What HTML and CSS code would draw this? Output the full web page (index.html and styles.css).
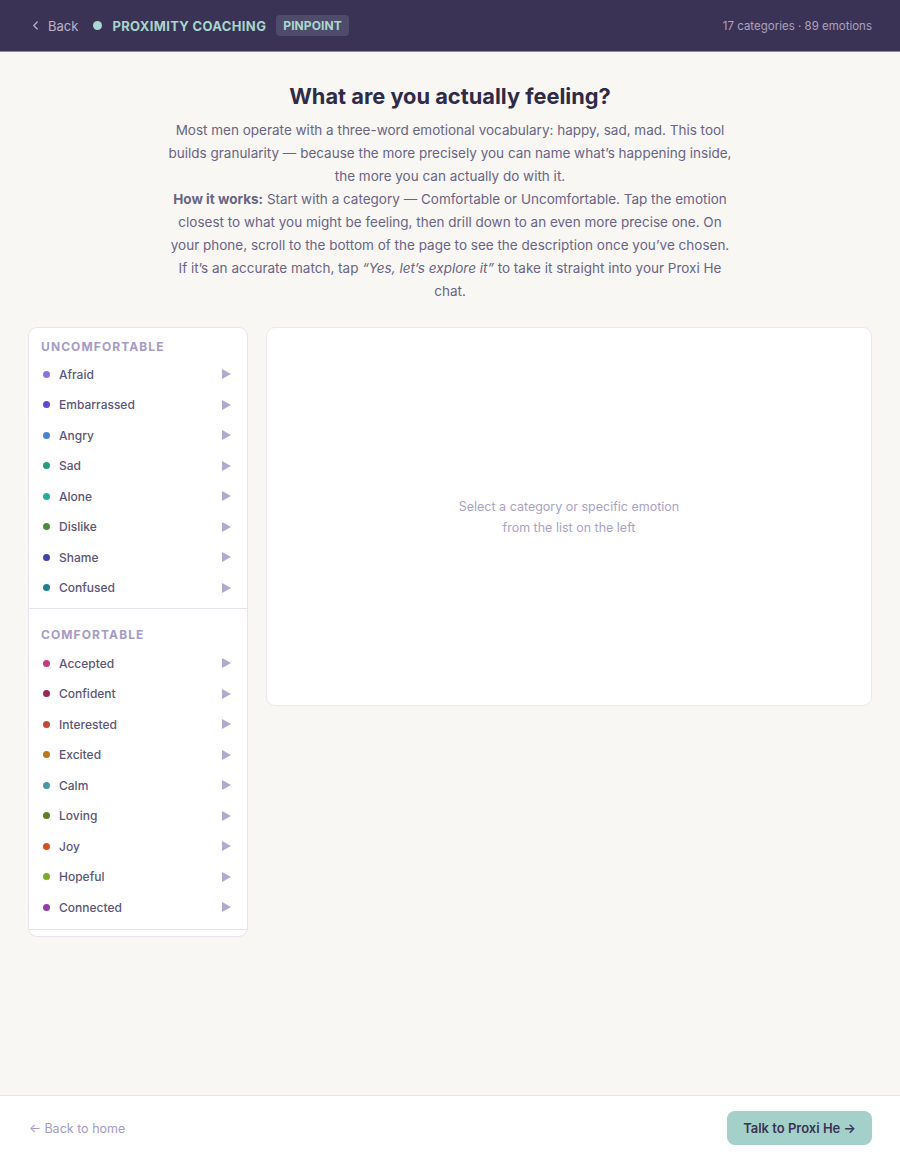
FILE: index.html
```html
<!DOCTYPE html>
<html lang="en">
<head>
<meta charset="utf-8">
<title>Pinpoint — Proximity Coaching</title>
<link rel="stylesheet" href="styles.css">
</head>
<body>
<header class="topbar">
  <div class="topbar-left">
    <a class="back" href="#"><svg class="chev" viewBox="0 0 8 10" width="7" height="9"><path d="M6 1 L2 5 L6 9" fill="none" stroke="currentColor" stroke-width="1.4" stroke-linecap="round" stroke-linejoin="round"/></svg>Back</a>
    <span class="brand-dot"></span>
    <span class="brand">PROXIMITY COACHING</span>
    <span class="badge">PINPOINT</span>
  </div>
  <div class="stats">17 categories · 89 emotions</div>
</header>

<main class="main">
  <section class="intro">
    <h1>What are you actually feeling?</h1>
    <p>Most men operate with a three-word emotional vocabulary: happy, sad, mad. This tool builds granularity — because the more precisely you can name what’s happening inside, the more you can actually do with it.</p>
    <p><b class="lead">How it works:</b> Start with a category — Comfortable or Uncomfortable. Tap the emotion closest to what you might be feeling, then drill down to an even more precise one. On your phone, scroll to the bottom of the page to see the description once you’ve chosen. If it’s an accurate match, tap <i class="quote">“Yes, let’s explore it”</i> to take it straight into your Proxi He chat.</p>
  </section>

  <div class="explorer">
    <nav class="list">
      <div class="group">
        <div class="group-title">UNCOMFORTABLE</div>
        <div class="item"><span class="dot" style="background:#8b72de"></span><span class="name">Afraid</span><span class="arrow"></span></div>
        <div class="item"><span class="dot" style="background:#6548cf"></span><span class="name">Embarrassed</span><span class="arrow"></span></div>
        <div class="item"><span class="dot" style="background:#4a82d6"></span><span class="name">Angry</span><span class="arrow"></span></div>
        <div class="item"><span class="dot" style="background:#2b9a7e"></span><span class="name">Sad</span><span class="arrow"></span></div>
        <div class="item"><span class="dot" style="background:#27ad9c"></span><span class="name">Alone</span><span class="arrow"></span></div>
        <div class="item"><span class="dot" style="background:#4b8d3c"></span><span class="name">Dislike</span><span class="arrow"></span></div>
        <div class="item"><span class="dot" style="background:#4443a6"></span><span class="name">Shame</span><span class="arrow"></span></div>
        <div class="item"><span class="dot" style="background:#1f7f94"></span><span class="name">Confused</span><span class="arrow"></span></div>
      </div>
      <div class="group">
        <div class="group-title">COMFORTABLE</div>
        <div class="item"><span class="dot" style="background:#c43c7c"></span><span class="name">Accepted</span><span class="arrow"></span></div>
        <div class="item"><span class="dot" style="background:#9b2558"></span><span class="name">Confident</span><span class="arrow"></span></div>
        <div class="item"><span class="dot" style="background:#c34a32"></span><span class="name">Interested</span><span class="arrow"></span></div>
        <div class="item"><span class="dot" style="background:#b9771c"></span><span class="name">Excited</span><span class="arrow"></span></div>
        <div class="item"><span class="dot" style="background:#4996a5"></span><span class="name">Calm</span><span class="arrow"></span></div>
        <div class="item"><span class="dot" style="background:#5f7d22"></span><span class="name">Loving</span><span class="arrow"></span></div>
        <div class="item"><span class="dot" style="background:#d84d1d"></span><span class="name">Joy</span><span class="arrow"></span></div>
        <div class="item"><span class="dot" style="background:#7aac2c"></span><span class="name">Hopeful</span><span class="arrow"></span></div>
        <div class="item"><span class="dot" style="background:#8e3fa8"></span><span class="name">Connected</span><span class="arrow"></span></div>
      </div>
    </nav>

    <section class="detail">
      <p class="empty">Select a category or specific emotion<br>from the list on the left</p>
    </section>
  </div>
</main>

<footer class="footer">
  <a class="home" href="#">← Back to home</a>
  <a class="cta" href="#">Talk to Proxi He →</a>
</footer>
</body>
</html>
```

FILE: styles.css
```css
* { box-sizing: border-box; }

html, body { margin: 0; padding: 0; }

body {
  min-height: 100vh;
  display: flex;
  flex-direction: column;
  background: #f8f7f4;
  font-family: Inter, "Noto Sans", sans-serif;
  color: #3a3354;
}

a { text-decoration: none; }

/* top bar */
.topbar {
  height: 52px;
  background: #3b3355;
  border-bottom: 1px solid #8e88a6;
  display: flex;
  align-items: center;
  justify-content: space-between;
  padding: 0 28px 0 32px;
}

.topbar-left {
  display: flex;
  align-items: center;
}

.back {
  display: flex;
  align-items: center;
  gap: 9px;
  color: #b9b3cd;
  font-size: 13px;
  margin-right: 15px;
}

.chev { color: #b9b3cd; }

.brand-dot {
  width: 9px;
  height: 9px;
  border-radius: 50%;
  background: #a9d8cf;
  margin-right: 10px;
}

.brand {
  color: #a6d6cd;
  font-weight: 700;
  font-size: 13px;
  letter-spacing: 0.35px;
  margin-right: 10px;
}

.badge {
  background: #4f4b6b;
  color: #a9d8cf;
  font-weight: 700;
  font-size: 12px;
  letter-spacing: 0.1px;
  padding: 3px 7px;
  border-radius: 4px;
}

.stats {
  color: #a9a3bd;
  font-size: 11.5px;
}

/* intro */
.main {
  flex: 1;
  padding: 29px 28px 40px;
}

.intro {
  text-align: center;
  max-width: 570px;
  margin: 0 auto;
}

.intro h1 {
  margin: 0 0 8px;
  font-size: 21.8px;
  line-height: 30px;
  font-weight: 700;
  color: #2f2a47;
}

.intro p {
  margin: 0;
  font-size: 13.5px;
  line-height: 23px;
  color: #6a6485;
}

.lead { font-weight: 700; }

.quote { font-style: italic; }

/* explorer */
.explorer {
  display: grid;
  grid-template-columns: 220px 1fr;
  gap: 18px;
  align-items: start;
  margin-top: 24px;
}

.list {
  background: #ffffff;
  border: 1px solid #e7e4ee;
  border-radius: 9px;
  padding-bottom: 6px;
}

.group {
  padding: 11px 0 5px;
  border-bottom: 1px solid #e7e4ee;
}

.group + .group { padding-top: 18px; padding-bottom: 6px; }

.group-title {
  padding: 0 12px;
  font-size: 12px;
  line-height: 16px;
  font-weight: 700;
  letter-spacing: 1.1px;
  color: #a59cc6;
  margin-bottom: 4px;
}

.group + .group .group-title { margin-bottom: 5px; }

.item {
  display: flex;
  align-items: center;
  height: 30.5px;
  padding: 0 16px 0 14px;
}

.dot {
  width: 7px;
  height: 7px;
  border-radius: 50%;
  margin-right: 9px;
}

.name {
  flex: 1;
  font-size: 12px;
  color: #5c5679;
  font-weight: 500;
}

.arrow {
  width: 0;
  height: 0;
  border-top: 5px solid transparent;
  border-bottom: 5px solid transparent;
  border-left: 9px solid #b1a9cf;
}

.detail {
  background: #ffffff;
  border: 1px solid #ebe9ef;
  border-radius: 9px;
  height: 379px;
  display: flex;
  align-items: center;
  justify-content: center;
}

.empty {
  margin: 0;
  text-align: center;
  font-size: 12.5px;
  line-height: 21px;
  color: #aaa3c7;
}

/* footer */
.footer {
  background: #ffffff;
  border-top: 1px solid #e6e4ea;
  height: 65px;
  display: flex;
  align-items: center;
  justify-content: space-between;
  padding: 0 28px 0 29px;
}

.home {
  color: #a59cc6;
  font-size: 12.5px;
}

.cta {
  background: #a3d1ca;
  color: #3a3354;
  font-size: 13px;
  font-weight: 600;
  padding: 9px 16px;
  border-radius: 8px;
}
```
